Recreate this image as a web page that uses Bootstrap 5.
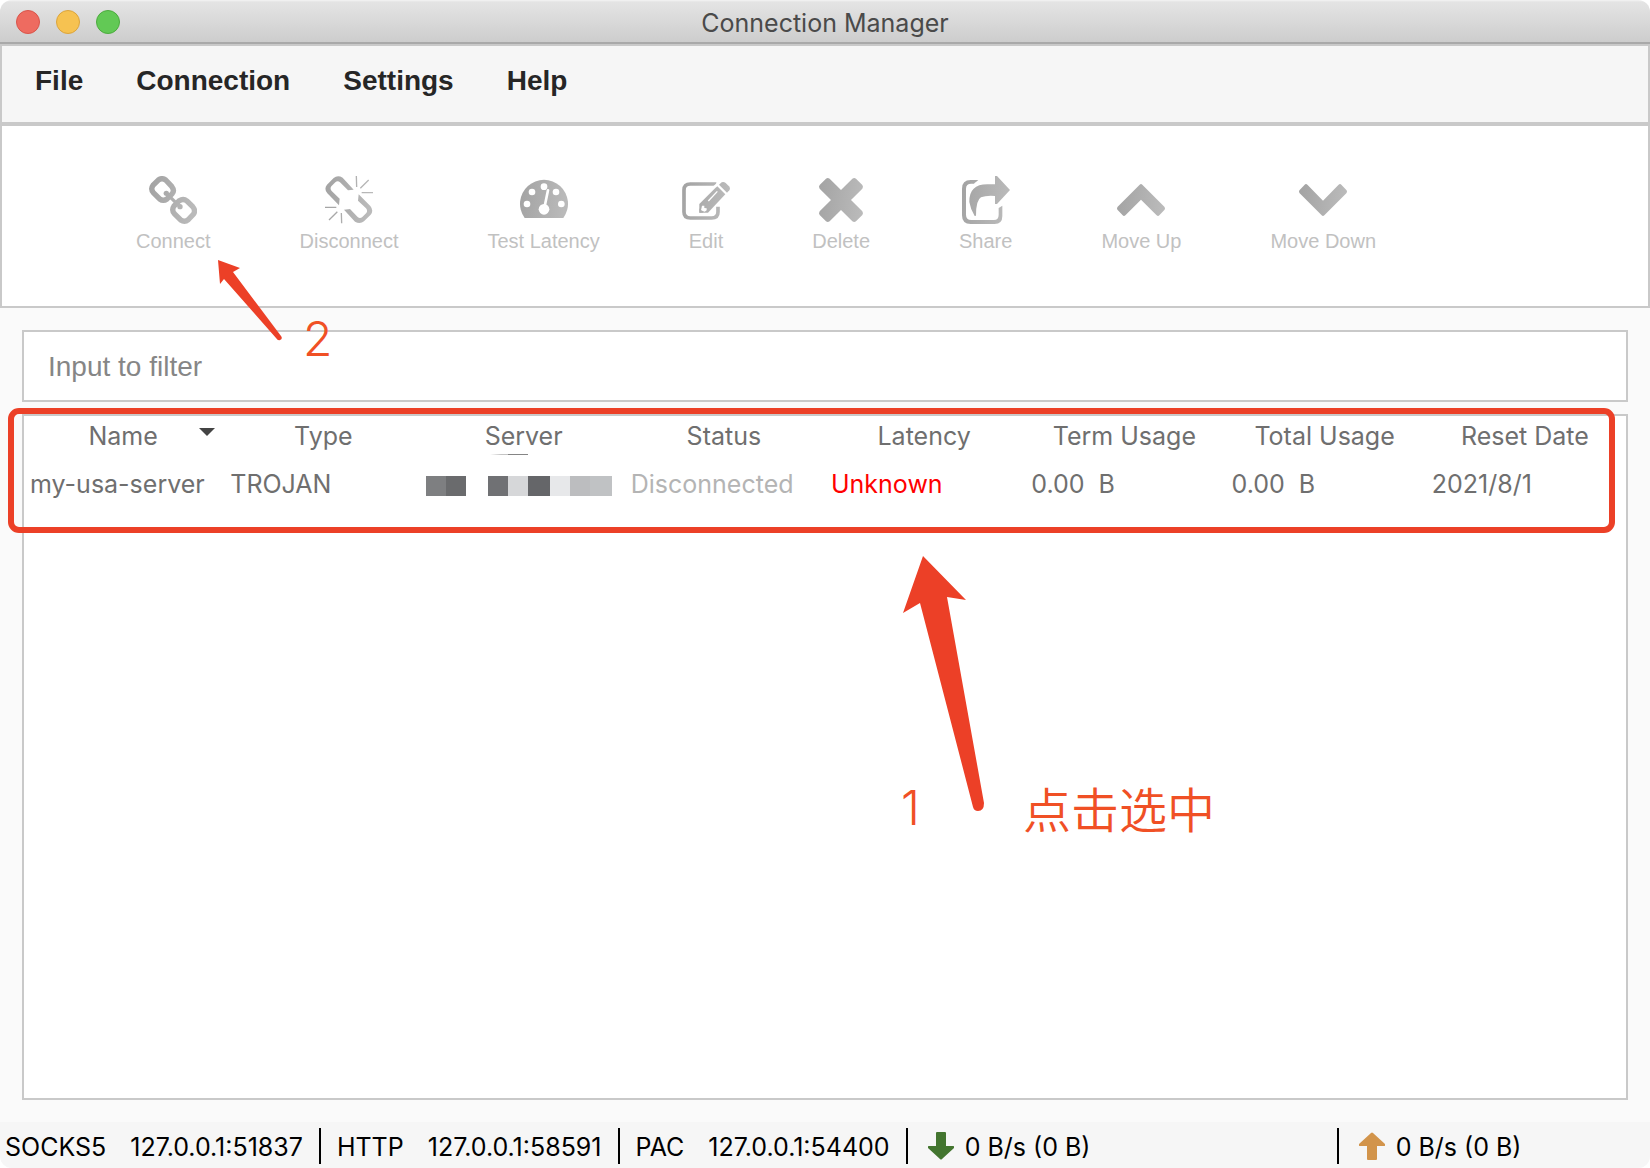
<!DOCTYPE html>
<html lang="en">
<head>
<meta charset="utf-8">
<meta name="viewport" content="width=device-width, initial-scale=1">
<title>Connection Manager</title>
<link href="https://cdn.jsdelivr.net/npm/bootstrap@5.3.0/dist/css/bootstrap.min.css" rel="stylesheet">
<script src="https://cdn.jsdelivr.net/npm/bootstrap@5.3.0/dist/js/bootstrap.bundle.min.js"></script>
<style>
  :root { --line: #c9c9c9; --red: #ec4027; --note: #f05025; }
  body { background: #fff; font-family: Inter, "Noto Sans CJK SC", sans-serif; font-size: 25px; line-height: 30px; }
  .app-window { background: #fafafa; border-radius: 12px; overflow: hidden; }
  .title-bar { height: 44px; padding-top: 4px; background: linear-gradient(#f4f4f4 0, #e4e4e4 2px, #cdcdcd 100%); border-bottom: 2px solid #a9a9a9; color: #4a4a4a; }
  .title-bar h1 { font-size: 25px; line-height: 30px; }
  .lights { left: 16px; top: 10px; gap: 16px; }
  .light { width: 24px; height: 24px; border-radius: 50%; border: 1px solid; }
  .light-close { background: #ee6b60; border-color: #d9544a; }
  .light-min { background: #f6c251; border-color: #dba43c; }
  .light-max { background: #62c955; border-color: #4cab3e; }
  .menu-bar { background: #f6f6f6; border: 2px solid var(--line); border-bottom-width: 4px; padding: 19px 33px 25px; gap: 53px; }
  .menu-bar a { font: bold 28px/32px "Liberation Sans", sans-serif; color: #262626; text-decoration: none; }
  .tool-bar { background: #fff; border: 2px solid var(--line); border-top: 0; padding: 50px 134px 53px; gap: 89px; }
  .tool { font: 20px/24px "Liberation Sans", sans-serif; color: #c1c1c1; gap: 5px; }
  .tool svg { width: 48px; height: 48px; margin: 0 -8px; }
  .work-area { padding: 22px; gap: 12px; }
  .filter-box { font: 28px/32px "Liberation Sans", sans-serif; border: 2px solid var(--line); border-radius: 0; padding: 19px 24px 17px; }
  .filter-box::placeholder { color: #868686; }
  .list-frame { background: #fff; border: 2px solid var(--line); }
  .servers { table-layout: fixed; color: #6f6f6f; }
  .servers th, .servers td { height: 60px; padding: 0 6px; white-space: nowrap; vertical-align: middle; }
  .servers th { height: 38px; padding: 2px 8px 0 6px; font-weight: 400; text-align: center; }
  .servers .masked { padding-left: 1px; }
  .servers .masked svg { display: block; }
  .sort-mark { right: 9px; top: 12px; }
  .idle { color: #b4b4b4; }
  .unknown { color: #f00; }
  .highlight { left: -16px; right: 11px; top: -8px; height: 125px; border: 6px solid var(--red); border-radius: 11px; }
  .note { color: var(--note); font-size: 48px; line-height: 56px; white-space: nowrap; font-weight: 350; }
  .arrow { fill: var(--red); }
  .arrow-row { left: 878px; top: 139px; }
  .note-one { left: 877px; top: 364px; }
  .note-pick { left: 999px; top: 367px; }
  .arrow-tool { left: 216px; top: 132px; }
  .note-two { left: 303px; top: 185px; }
  .status-bar { background: #f6f6f6; color: #000; height: 46px; padding-top: 2px; }
  .stat { height: 36px; padding: 0 16px; gap: 24px; border-left: 2px solid #000; white-space: nowrap; }
  .stat span { padding-top: 2px; }
  .stat:first-child { border-left: 0; padding-left: 5px; }
  .rate { padding-left: 20px; gap: 11px; }
  .rate-down { min-width: 431px; }
</style>
</head>
<body>
<div class="app-window d-flex flex-column min-vh-100">
  <header class="title-bar position-relative d-flex align-items-center justify-content-center">
    <div class="lights position-absolute d-flex">
      <span class="light light-close"></span><span class="light light-min"></span><span class="light light-max"></span>
    </div>
    <h1 class="m-0 fw-normal">Connection Manager</h1>
  </header>
  <nav class="menu-bar d-flex" aria-label="Main menu">
    <a href="#">File</a><a href="#">Connection</a><a href="#">Settings</a><a href="#">Help</a>
  </nav>
  <div class="position-relative">
    <div class="tool-bar d-flex" role="toolbar" aria-label="Connection actions">
      <button type="button" class="tool btn border-0 p-0 d-flex flex-column align-items-center">
        <svg viewBox="0 0 144 144" fill="none" stroke="url(#metal)" aria-hidden="true">
          <defs><linearGradient id="metal" gradientUnits="userSpaceOnUse" x1="0" y1="0" x2="144" y2="20"><stop offset="0" stop-color="#a2a2a2"/><stop offset="1" stop-color="#bababa"/></linearGradient></defs>
          <path stroke-width="16" d="M28 12Q39 4 50 12L68 31Q78 44 69 54L54 69Q43 77 32 69L13 50Q4 39 12 28Z"/>
          <path stroke-width="16" d="M91 74Q103 66 114 75L131 92Q141 104 133 115L118 131Q107 140 95 132L76 113Q67 102 75 90Z"/>
          <path stroke-width="10" d="M52 52L93 92"/>
          <g fill="url(#metal)" stroke="none"><circle cx="52" cy="52" r="8"/><circle cx="93" cy="92" r="8"/></g>
        </svg>Connect</button>
      <button type="button" class="tool btn border-0 p-0 d-flex flex-column align-items-center">
        <svg viewBox="0 0 144 144" fill="url(#metal)" aria-hidden="true">
          <path d="M26 6Q38-4 53 5L86 41L69 43L45 19Q38 13 31 19L19 31Q14 38 20 45L44 68L42 88L7 52Q-4 38 6 26Z"/>
          <path d="M117 136Q105 146 90 137L57 101L75 99L98 123Q105 129 112 123L124 111Q129 104 123 97L99 74L101 55L136 90Q147 104 137 116Z"/>
          <path fill="none" stroke="url(#metal)" stroke-width="4" d="M94 0L95 33M131 12L106 37M110 50H144M50 142L49 111M12 132L37 107M34 94H0"/>
        </svg>Disconnect</button>
      <button type="button" class="tool btn border-0 p-0 d-flex flex-column align-items-center">
        <svg viewBox="0 0 144 144" fill="url(#metal)" aria-hidden="true">
          <path d="M14 126A72 72 0 1 1 130 126Z"/>
          <g fill="#fff"><circle cx="72" cy="32" r="10"/><circle cx="36" cy="48" r="10"/><circle cx="108" cy="48" r="10"/><circle cx="21" cy="84" r="10"/><circle cx="124" cy="84" r="10"/><circle cx="72" cy="100" r="16"/></g>
          <path fill="none" stroke="#fff" stroke-width="8" stroke-linecap="round" d="M73 96L84 43"/>
        </svg>Test Latency</button>
      <button type="button" class="tool btn border-0 p-0 d-flex flex-column align-items-center">
        <svg viewBox="0 0 144 144" fill="url(#metal)" aria-hidden="true">
          <path fill="none" stroke="url(#metal)" stroke-width="11" d="M103 24H25Q6 24 6 42V108Q6 126 25 126H89Q108 126 108 108V92"/>
          <path fill="#fff" d="M92 32L112 14L122 14L104 34Z"/>
          <path d="M100 36L106 31L130 55L78 110H52V84Z"/>
          <path d="M111 26L119 19Q125 16 131 21L141 31Q146 37 142 43L135 50Z"/>
          <path fill="none" stroke="#fff" stroke-width="4" d="M79 75L106 46"/>
          <path fill="#fff" d="M60 89L67 89L67 96L74 97L74 103L68 107L57 103Z"/>
          <path d="M52 110V97L64 110Z"/>
        </svg>Edit</button>
      <button type="button" class="tool btn border-0 p-0 d-flex flex-column align-items-center">
        <svg viewBox="0 0 144 144" fill="url(#metal)" aria-hidden="true">
          <path d="M27 8Q32 4 38 8L72 42L106 8Q112 4 117 8L136 27Q140 32 136 38L102 72L136 106Q140 112 136 117L117 136Q112 140 106 136L72 102L38 136Q32 140 27 136L8 117Q4 112 8 106L42 72L8 38Q4 32 8 27Z"/>
        </svg>Delete</button>
      <button type="button" class="tool btn border-0 p-0 d-flex flex-column align-items-center">
        <svg viewBox="0 0 144 144" fill="url(#metal)" aria-hidden="true">
          <path d="M26 12H49L42 18Q38 20 36 23H28Q12 23 12 38V116Q12 132 28 132H96Q110 132 110 116V96L121 89V120Q121 144 98 144H26Q0 144 0 118V38Q0 12 26 12Z"/>
          <path d="M99 0H105L144 42L105 84H99V60Q72 58 57 64Q42 72 42 119L38 120Q25 98 22 78Q21 25 76 25H99Z"/>
        </svg>Share</button>
      <button type="button" class="tool btn border-0 p-0 d-flex flex-column align-items-center">
        <svg viewBox="0 0 144 144" fill="url(#metal)" aria-hidden="true">
          <path d="M68 26Q72 22 76 26L142 92Q146 98 142 102L127 118Q123 122 118 117L72 71L26 117Q21 122 17 118L2 102Q-2 98 2 92Z"/>
        </svg>Move Up</button>
      <button type="button" class="tool btn border-0 p-0 d-flex flex-column align-items-center">
        <svg viewBox="0 0 144 144" fill="url(#metal)" aria-hidden="true">
          <path d="M68 118Q72 122 76 118L142 52Q146 46 142 42L127 26Q123 22 118 27L72 74L26 27Q21 22 17 26L2 42Q-2 46 2 52Z"/>
        </svg>Move Down</button>
    </div>
    <svg class="arrow arrow-tool position-absolute z-1" width="70" height="84" viewBox="216 258 70 84" aria-hidden="true">
      <path d="M218 260L240 268L233 272L281 336Q283 339 280 340Q278 341 276 338L224 279L220 284Z"/>
    </svg>
    <div class="note note-two position-absolute z-1">2</div>
  </div>
  <main class="work-area flex-grow-1 d-flex flex-column">
    <input type="text" class="filter-box form-control" placeholder="Input to filter" aria-label="Input to filter">
    <section class="list-frame flex-grow-1 position-relative">
      <table class="servers w-100">
        <thead>
          <tr>
            <th class="position-relative">Name<svg class="sort-mark position-absolute" width="16" height="8" aria-hidden="true"><path fill="#444" d="M0 0H16L8 8Z"/></svg></th>
            <th>Type</th><th>Server</th><th>Status</th><th>Latency</th><th>Term Usage</th><th>Total Usage</th><th>Reset Date</th>
          </tr>
        </thead>
        <tbody>
          <tr>
            <td>my-usa-server</td>
            <td>TROJAN</td>
            <td class="masked">
              <svg width="186" height="60" role="img" aria-label="Hidden address">
                <path fill="#c4c4c4" d="M64 1Q80-1 102 0V1Z"/><path fill="#858585" d="M82 0H102V1H82Z"/>
                <path fill="#7e7f81" d="M0 22H20V42H0Z"/><path fill="#6a6b6d" d="M20 22H40V42H20Z"/>
                <path fill="#707174" d="M62 22H82V42H62Z"/><path fill="#d6d7d9" d="M82 22H102V42H82Z"/>
                <path fill="#656669" d="M102 22H124V42H102Z"/><path fill="#e7e8ea" d="M124 22H144V42H124Z"/>
                <path fill="#bcbdbf" d="M144 22H164V42H144Z"/><path fill="#c0c2c4" d="M164 22H186V42H164Z"/>
              </svg>
            </td>
            <td class="idle">Disconnected</td>
            <td class="unknown">Unknown</td>
            <td>0.00&nbsp; B</td>
            <td>0.00&nbsp; B</td>
            <td>2021/8/1</td>
          </tr>
        </tbody>
      </table>
      <div class="highlight position-absolute"></div>
      <svg class="arrow arrow-row position-absolute" width="86" height="260" viewBox="902 556 86 260" aria-hidden="true">
        <path d="M923 557L966 601L947 598L984 804Q984 812 978 812Q974 812 973 808L920 604L903 614Z"/>
      </svg>
      <div class="note note-one position-absolute">1</div>
      <div class="note note-pick position-absolute" lang="zh-CN">点击选中</div>
    </section>
  </main>
  <footer class="status-bar d-flex align-items-center">
    <div class="stat d-flex align-items-center"><span>SOCKS5</span><span>127.0.0.1:51837</span></div>
    <div class="stat d-flex align-items-center"><span>HTTP</span><span>127.0.0.1:58591</span></div>
    <div class="stat d-flex align-items-center"><span>PAC</span><span>127.0.0.1:54400</span></div>
    <div class="stat rate rate-down d-flex align-items-center">
      <svg width="26" height="28" aria-hidden="true"><path fill="#43752f" d="M9 0H17Q18 0 18 1V14H25Q27 14 26 16L14 27Q13 28 12 27L0 16Q-1 14 1 14H8V1Q8 0 9 0Z"/></svg>
      <span>0 B/s (0 B)</span></div>
    <div class="stat rate d-flex align-items-center">
      <svg width="26" height="28" aria-hidden="true"><path fill="#d2944b" d="M9 28H17Q18 28 18 27V14H25Q27 14 26 12L14 1Q13 0 12 1L0 12Q-1 14 1 14H8V27Q8 28 9 28Z"/></svg>
      <span>0 B/s (0 B)</span></div>
  </footer>
</div>
</body>
</html>
